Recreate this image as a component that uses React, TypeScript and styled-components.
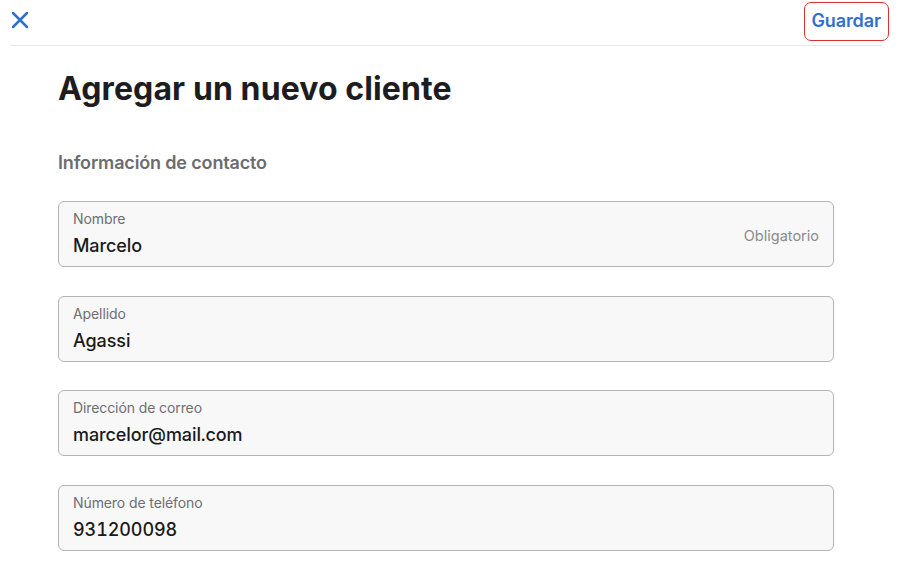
import React from "react";
import styled, { createGlobalStyle } from "styled-components";

const Global = createGlobalStyle`
  html, body { margin: 0; padding: 0; background: #ffffff; }
  body { font-family: Inter, "Noto Sans", sans-serif; -webkit-font-smoothing: antialiased; }
  * { box-sizing: border-box; }
`;

const Page = styled.div`
  width: 900px;
  height: 580px;
  overflow: hidden;
  background: #fff;
`;

const Header = styled.header`
  height: 46px;
  margin: 0 18px 0 10px;
  display: flex;
  align-items: center;
  justify-content: space-between;
  border-bottom: 1px solid #e8e8ea;
`;

const CloseButton = styled.button`
  border: none;
  background: none;
  padding: 0;
  margin: 0 0 5px 1px;
  width: 18px;
  height: 18px;
  display: flex;
  color: #2f6fd0;
`;

const SaveButton = styled.button`
  margin: 0 -7px 3px 0;
  height: 39px;
  padding: 0 7px 2px 6px;
  border: 1.5px solid #d9332b;
  border-radius: 7px;
  background: none;
  font-family: Inter, sans-serif;
  font-size: 18px;
  font-weight: 600;
  color: #2f6fd0;
  letter-spacing: -0.1px;
`;

const Main = styled.main`
  padding: 22px 0 0 58px;
  width: 834px;
`;

const Title = styled.h1`
  margin: 0;
  font-size: 32px;
  line-height: 42px;
  font-weight: 700;
  color: #1d1d1f;
  letter-spacing: 0.1px;
`;

const Section = styled.h2`
  margin: 41px 0 0;
  font-size: 18px;
  line-height: 24px;
  font-weight: 600;
  color: #6c6c70;
  letter-spacing: -0.15px;
`;

const Fields = styled.div`
  margin-top: 26px;
  display: flex;
  flex-direction: column;
  gap: 28.6px;
`;

const Field = styled.div`
  height: 66px;
  border: 1.5px solid #b4b4b8;
  border-radius: 6px;
  background: #f8f8f8;
  padding: 8px 14px 0 14px;
  display: flex;
  align-items: center;
`;

const FieldBody = styled.div`
  flex: 1;
  display: flex;
  flex-direction: column;
  align-self: flex-start;
`;

const Label = styled.span`
  font-size: 14px;
  line-height: 18px;
  color: #6e6e73;
  letter-spacing: -0.1px;
`;

const Value = styled.span`
  margin-top: 7px;
  font-size: 18px;
  line-height: 22px;
  font-weight: 500;
  color: #1a1a1a;
  letter-spacing: -0.1px;
  font-variant-numeric: tabular-nums;
`;

const Hint = styled.span`
  font-size: 14.5px;
  color: #8a8a8e;
  margin-bottom: 6px;
`;

const fields = [
  { label: "Nombre", value: "Marcelo", hint: "Obligatorio" },
  { label: "Apellido", value: "Agassi" },
  { label: "Dirección de correo", value: "marcelor@mail.com" },
  { label: "Número de teléfono", value: "931200098" },
];

export default function App() {
  return (
    <Page>
      <Global />
      <Header>
        <CloseButton aria-label="Cerrar">
          <svg width="18" height="18" viewBox="0 0 18 18">
            <path d="M2 2 L16 16 M16 2 L2 16" stroke="currentColor" strokeWidth="2.5" strokeLinecap="round" />
          </svg>
        </CloseButton>
        <SaveButton>Guardar</SaveButton>
      </Header>
      <Main>
        <Title>Agregar un nuevo cliente</Title>
        <Section>Información de contacto</Section>
        <Fields>
          {fields.map((f) => (
            <Field key={f.label}>
              <FieldBody>
                <Label>{f.label}</Label>
                <Value>{f.value}</Value>
              </FieldBody>
              {f.hint && <Hint>{f.hint}</Hint>}
            </Field>
          ))}
        </Fields>
      </Main>
    </Page>
  );
}
